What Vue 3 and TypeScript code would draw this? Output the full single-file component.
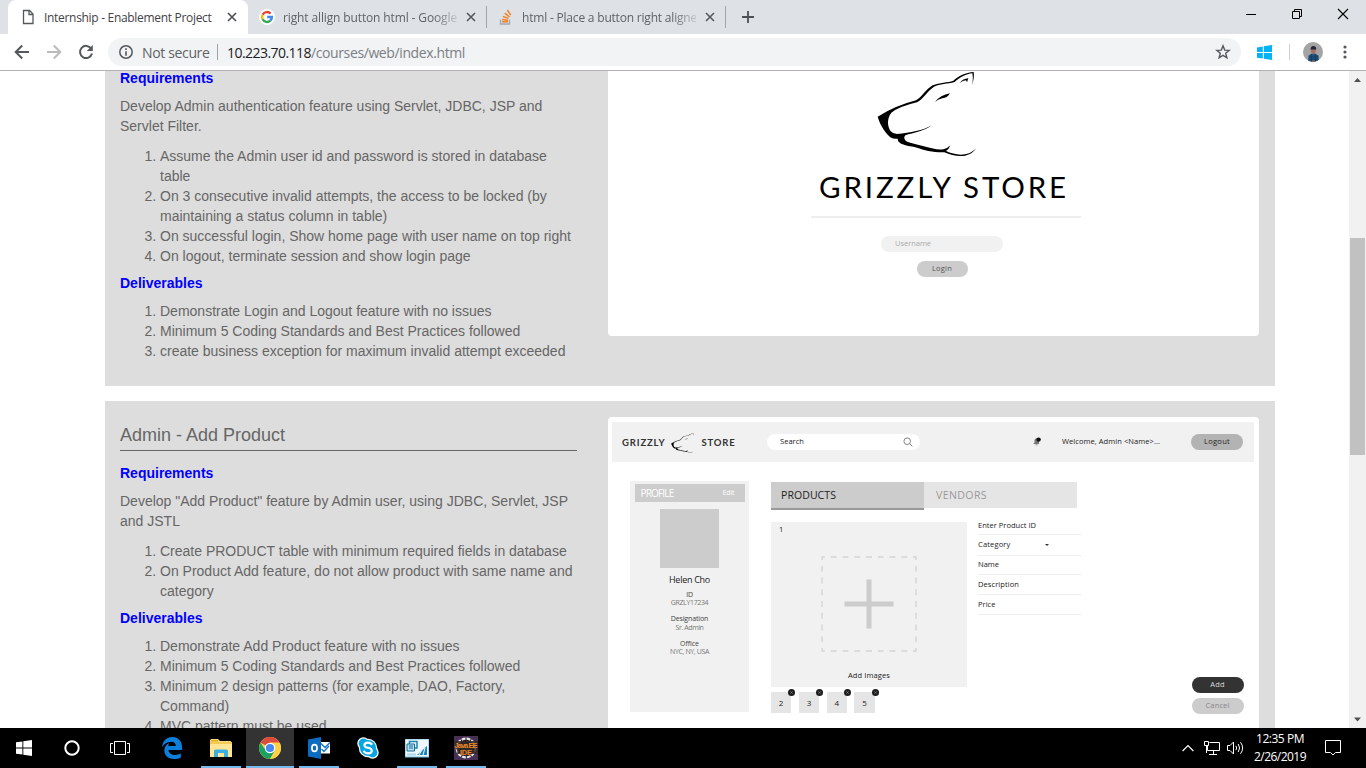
<script setup lang="ts">
import type { Directive } from 'vue'

interface Tab { title: string; kind: 'page' | 'google' | 'stack'; width: number }

const tabs: Tab[] = [
  { title: 'right allign button html - Google', kind: 'google', width: 174 },
  { title: 'html - Place a button right aligne', kind: 'stack', width: 175 },
]

const loginRequirements = [
  'Assume the Admin user id and password is stored in database table',
  'On 3 consecutive invalid attempts, the access to be locked (by maintaining a status column in table)',
  'On successful login, Show home page with user name on top right',
  'On logout, terminate session and show login page',
]
const loginDeliverables = [
  'Demonstrate Login and Logout feature with no issues',
  'Minimum 5 Coding Standards and Best Practices followed',
  'create business exception for maximum invalid attempt exceeded',
]
const productRequirements = [
  'Create PRODUCT table with minimum required fields in database',
  'On Product Add feature, do not allow product with same name and category',
]
const productDeliverables = [
  'Demonstrate Add Product feature with no issues',
  'Minimum 5 Coding Standards and Best Practices followed',
  'Minimum 2 design patterns (for example, DAO, Factory, Command)',
  'MVC pattern must be used',
]
const fields = [
  { label: 'Enter Product ID', width: 58, cls: 'f1' },
  { label: 'Category', width: 32.5, cls: 'f2' },
  { label: 'Name', width: 21, cls: 'f3' },
  { label: 'Description', width: 41, cls: 'f4' },
  { label: 'Price', width: 17.5, cls: 'f5' },
]
const thumbs = [2, 3, 4, 5]

// Tracks a label's letters so that it spans the given width in pixels.
const vFit: Directive<HTMLElement, number> = {
  mounted(el, { value }) {
    const count = (el.textContent ?? '').trim().length
    const natural = el.getBoundingClientRect().width
    el.style.letterSpacing = `${(value - natural) / count}px`
  },
}

const bearPath =
  'M232 140 Q285 107 347 91 C366 80 376 58 397 46 C418 37 442 38 459 32 C474 18 496 8 520 6 C522 20 519 34 515 46 C518 32 518 20 516 10 C498 12 478 22 463 36 C442 42 418 41 401 50 C382 62 372 84 350 97 Q298 109 273 128 C260 145 260 168 271 184 Q278 192 290 192 C330 188 368 182 394 166 C372 184 340 188 315 196 C308 203 313 213 325 217 C350 224 375 230 395 235 Q415 240 429 238 Q441 236 450 226 Q446 238 437 243 C465 256 503 262 528 234 C506 268 464 260 432 247 C400 248 370 240 350 233 C330 229 310 226 300 220 Q290 214 293 206 Q280 208 270 202 C250 184 238 160 232 140Z'
</script>

<template>
  <div class="screen">
    <header class="tabstrip">
      <div class="tab active">
        <svg class="tabicon" width="16" height="16" viewBox="0 0 16 16"><path d="M3.5 1.5H9.5L13 5V14.5H3.5ZM9 1.5V5.5H13" fill="none" stroke="#55585c" stroke-width="1.3" /></svg>
        <span class="tabtitle"><span v-fit="167.5" class="fit">Internship - Enablement Project</span></span>
        <svg class="close" width="10" height="10" viewBox="0 0 10 10"><path d="M1 1L9 9M9 1L1 9" stroke="#4a4d51" stroke-width="1.6" /></svg>
      </div>
      <div v-for="t in tabs" :key="t.kind" class="tab idle">
        <svg v-if="t.kind === 'google'" class="tabicon" width="16" height="16" viewBox="0 0 16 16">
          <circle cx="8" cy="8" r="8" fill="#fff" />
          <g fill="none" stroke-width="2.4">
            <path d="M11.6 4.6A5 5 0 0 0 3.6 5.7" stroke="#ea4335" />
            <path d="M3.6 5.7A5 5 0 0 0 3.6 10.3" stroke="#fbbc05" />
            <path d="M3.6 10.3A5 5 0 0 0 11.3 11.7" stroke="#34a853" />
            <path d="M11.3 11.7A5 5 0 0 0 12.9 8H8.2" stroke="#4285f4" />
          </g>
        </svg>
        <svg v-else class="tabicon" width="16" height="16" viewBox="0 0 16 16">
          <path d="M2.5 10.5V15H11.5V10.5" fill="none" stroke="#a4a8ac" stroke-width="1.3" />
          <path d="M4 12.8H10M4.2 10.4L10.1 11.2M4.9 7.5L10.5 9.4M6.8 4.2L11.5 8M9.3 1L12.8 6.2" fill="none" stroke="#f48024" stroke-width="1.5" />
        </svg>
        <span class="tabtitle faded"><span v-fit="t.width" class="fit">{{ t.title }}</span></span>
        <svg class="close" width="10" height="10" viewBox="0 0 10 10"><path d="M1 1L9 9M9 1L1 9" stroke="#55585c" stroke-width="1.6" /></svg>
      </div>
      <svg class="plus" width="12" height="12" viewBox="0 0 12 12"><path d="M6 0V12M0 6H12" stroke="#4d5054" stroke-width="1.8" /></svg>
      <div class="winbtns">
        <svg width="46" height="28" viewBox="0 0 46 28"><path d="M18 14.5H28" stroke="#000" /></svg>
        <svg width="46" height="28" viewBox="0 0 46 28"><path d="M18.5 11.5H25.5V18.5H18.5ZM20.5 11V9.5H27.5V16.5H26" fill="none" stroke="#000" /></svg>
        <svg width="46" height="28" viewBox="0 0 46 28"><path d="M18 9L28 19M28 9L18 19" stroke="#000" stroke-width="1.1" /></svg>
      </div>
    </header>

    <div class="toolbar">
      <svg class="nav" width="16" height="16" viewBox="0 0 16 16"><path d="M15 8H2M8.2 1.5L1.7 8L8.2 14.5" fill="none" stroke="#55585d" stroke-width="2" /></svg>
      <svg class="nav" width="16" height="16" viewBox="0 0 16 16"><path d="M1 8H14M7.8 1.5L14.3 8L7.8 14.5" fill="none" stroke="#b9bbbe" stroke-width="2" /></svg>
      <svg class="nav" width="16" height="16" viewBox="0 0 16 16"><path d="M13.2 4.6A6.1 6.1 0 1 0 14 9.6" fill="none" stroke="#55585d" stroke-width="2" /><path d="M14.8 1V7H8.8Z" fill="#55585d" /></svg>
      <div class="omnibox">
        <svg class="info" width="14" height="14" viewBox="0 0 14 14"><circle cx="7" cy="7" r="6.2" fill="none" stroke="#55585d" stroke-width="1.5" /><path d="M7 3.2V4.9M7 6.2V10.8" stroke="#55585d" stroke-width="1.6" /></svg>
        <span class="secure"><span v-fit="67.5" class="fit">Not secure</span></span>
        <i class="bar"></i>
        <span class="url"><span v-fit="84" class="fit host">10.223.70.118</span><span v-fit="154" class="fit">/courses/web/index.html</span></span>
        <svg class="star" width="16" height="16" viewBox="0 0 16 16"><path d="M8 1.8L9.7 6.1L14.2 6.4L10.7 9.3L11.9 13.8L8 11.3L4.1 13.8L5.3 9.3L1.8 6.4L6.3 6.1Z" fill="none" stroke="#55585d" stroke-width="1.4" /></svg>
      </div>
      <svg class="winext" width="15" height="15" viewBox="0 0 15 15"><path d="M0 2.4L5.8 1.5V7H0ZM6.8 1.3L15 0V7H6.8ZM0 8H5.8V13.5L0 12.7ZM6.8 8H15V15L6.8 13.8Z" fill="#00b3f4" /></svg>
      <i class="sep"></i>
      <svg class="avatar" width="20" height="20" viewBox="0 0 20 20">
        <defs><clipPath id="face"><circle cx="10" cy="10" r="10" /></clipPath></defs>
        <g clip-path="url(#face)"><rect width="20" height="20" fill="#a5a4a4" /><path d="M5 20L5.5 13.5L9 11.5H12L15.5 13.5L16 20Z" fill="#1d5382" /><path d="M6 15H15M6 17.5H15M8.5 12V20M12.5 12V20" stroke="#153651" stroke-width=".7" /><ellipse cx="10.4" cy="8.5" rx="2.4" ry="3.4" fill="#a56e60" /><path d="M7.6 7.6Q7.4 4 10.4 4T13.2 7.6Z" fill="#252839" /><path d="M9 18.5H12V20H9Z" fill="#9c655c" /></g>
      </svg>
      <svg class="dots" width="4" height="14" viewBox="0 0 4 14"><g fill="#55585d"><circle cx="2" cy="2" r="1.6" /><circle cx="2" cy="7" r="1.6" /><circle cx="2" cy="12" r="1.6" /></g></svg>
    </div>

    <div class="viewport">
      <main class="page">
        <section class="panel first">
          <div class="copy">
            <h4>Requirements</h4>
            <p>Develop Admin authentication feature using Servlet, JDBC, JSP and Servlet Filter.</p>
            <ol><li v-for="r in loginRequirements" :key="r">{{ r }}</li></ol>
            <h4>Deliverables</h4>
            <ol><li v-for="r in loginDeliverables" :key="r">{{ r }}</li></ol>
          </div>
          <div class="shot login">
            <svg class="bear" width="100" height="87" viewBox="230 3 300 261"><path :d="bearPath" /><path d="M404 96Q420 75 449 70Q442 84 426 85Q412 88 404 96ZM478 39Q488 26 504 25L500 37L497 31Q488 32 478 39Z" /></svg>
            <div class="brand"><span v-fit="250" class="fit">GRIZZLY STORE</span></div>
            <div class="rule"></div>
            <div class="user"><span v-fit="36" class="fit">Username</span></div>
            <div class="loginbtn"><span v-fit="20" class="fit">Login</span></div>
          </div>
        </section>

        <section class="panel second">
          <div class="copy">
            <h3>Admin - Add Product</h3>
            <h4>Requirements</h4>
            <p>Develop "Add Product" feature by Admin user, using JDBC, Servlet, JSP and JSTL</p>
            <ol><li v-for="r in productRequirements" :key="r">{{ r }}</li></ol>
            <h4>Deliverables</h4>
            <ol><li v-for="r in productDeliverables" :key="r">{{ r }}</li></ol>
          </div>
          <div class="shot product">
            <div class="mockhead">
              <div class="minibrand">
                <span v-fit="43.5" class="fit">GRIZZLY</span>
                <svg width="23" height="20" viewBox="230 3 300 261"><path :d="bearPath" /><path d="M404 96Q420 75 449 70Q442 84 426 85Q412 88 404 96Z" /></svg>
                <span v-fit="34" class="fit">STORE</span>
              </div>
              <div class="search"><span v-fit="24" class="fit">Search</span>
                <svg width="10" height="10" viewBox="0 0 10 10"><circle cx="4.2" cy="4.2" r="3.3" fill="none" stroke="#666" stroke-width=".8" /><path d="M6.6 6.6L9.3 9.3" stroke="#666" stroke-width=".9" /></svg>
              </div>
              <svg class="bell" width="8" height="9" viewBox="0 0 8 9"><path d="M.5 6.5L1.5 5.5V3Q2 1.2 4 1.2L6 3V6.5L6.5 7H.5Z" fill="#777" /><path d="M2.5 7.8H4.5" stroke="#888" /><circle cx="5.6" cy="2.6" r="2.2" fill="#111" /></svg>
              <div class="welcome"><span v-fit="98" class="fit">Welcome, Admin &lt;Name&gt;...</span></div>
              <div class="pill logout"><span v-fit="26" class="fit">Logout</span></div>
            </div>
            <div class="mockbody">
              <aside class="profile">
                <div class="phead"><span v-fit="33" class="fit big">PROFILE</span><span v-fit="12" class="fit">Edit</span></div>
                <div class="photo"></div>
                <div class="pname"><span v-fit="41" class="fit">Helen Cho</span></div>
                <div class="pl"><span v-fit="6.5" class="fit">ID</span></div>
                <div class="pv"><span v-fit="37.5" class="fit">GRZLY17234</span></div>
                <div class="pl"><span v-fit="37.5" class="fit">Designation</span></div>
                <div class="pv"><span v-fit="28" class="fit">Sr. Admin</span></div>
                <div class="pl"><span v-fit="19" class="fit">Office</span></div>
                <div class="pv"><span v-fit="39" class="fit">NYC, NY, USA</span></div>
              </aside>
              <div class="work">
                <div class="mocktabs">
                  <div class="on"><span v-fit="55" class="fit">PRODUCTS</span></div>
                  <div class="off"><span v-fit="51" class="fit">VENDORS</span></div>
                </div>
                <div class="entry">
                  <div class="images">
                    <div class="drop">
                      <span class="num">1</span>
                      <svg width="96" height="96" viewBox="0 0 96 96"><rect x="1" y="1" width="94" height="94" fill="none" stroke="#d3d3d3" stroke-width="1.3" stroke-dasharray="5.8 5.95" stroke-dashoffset="2.9" /><path d="M48 23.5V72.5M23.5 48H72.5" stroke="#ccc" stroke-width="5" /></svg>
                      <div class="addimg"><span v-fit="42" class="fit">Add Images</span></div>
                    </div>
                    <div class="thumbs">
                      <div v-for="n in thumbs" :key="n" class="thumb">{{ n }}<svg class="x" width="7" height="7" viewBox="0 0 7 7"><circle cx="3.5" cy="3.5" r="3.5" fill="#1d1d1d" /><path d="M2.3 2.3L4.7 4.7M4.7 2.3L2.3 4.7" stroke="#aaa" stroke-width=".5" /></svg></div>
                    </div>
                  </div>
                  <div class="form">
                    <div v-for="f in fields" :key="f.cls" :class="['field', f.cls]">
                      <span v-fit="f.width" class="fit">{{ f.label }}</span>
                      <i v-if="f.cls === 'f2'" class="caret"></i>
                    </div>
                  </div>
                </div>
              </div>
              <div class="actions">
                <div class="pill add"><span v-fit="14.5" class="fit">Add</span></div>
                <div class="pill cancel"><span v-fit="24" class="fit">Cancel</span></div>
              </div>
            </div>
          </div>
        </section>
      </main>
      <div class="scroll">
        <svg width="17" height="17" viewBox="0 0 17 17"><path d="M5 11H12L8.5 7Z" fill="#505050" /></svg>
        <div class="thumbbar"></div>
        <svg width="17" height="17" viewBox="0 0 17 17"><path d="M5 6.5H12L8.5 10.5Z" fill="#505050" /></svg>
      </div>
    </div>

    <footer class="taskbar">
      <div class="sys"><svg width="16" height="16" viewBox="0 0 16 16"><path d="M0 2.3L6.4 1.4V7.5H0ZM7.3 1.2L16 0V7.5H7.3ZM0 8.5H6.4V14.6L0 13.7ZM7.3 8.5H16V16L7.3 14.8Z" fill="#fff" /></svg></div>
      <div class="sys"><svg width="16" height="16" viewBox="0 0 16 16"><circle cx="8" cy="8" r="6.7" fill="none" stroke="#fff" stroke-width="2" /></svg></div>
      <div class="sys"><svg width="20" height="14" viewBox="0 0 20 14"><path d="M4.5 .5H15.5V13.5H4.5ZM3 2.5H.5V11.5H3M17 2.5H19.5V11.5H17" fill="none" stroke="#fff" /></svg></div>
      <div class="app">
        <svg width="20" height="22" viewBox="0 0 20 22"><path d="M0 10C.8 3.5 5 0 10.2 0C16.5 0 20 4.5 20 9.7V13H6.5C6.8 16.5 9.8 18 13 18C15 18 17.3 17.3 18.8 16.3V20.5C16.8 21.6 14.4 22 12 22C6.5 22 2.3 18.7 2.3 13.5C2.3 10.2 4.2 7.5 7.2 6C6.6 7 6.4 8.2 6.4 9H13.8C13.8 6.5 12.4 4.7 9 4.7C5.2 4.7 2 7 0 10Z" fill="#0c7fdc" /></svg>
      </div>
      <div class="app open">
        <svg width="22" height="19" viewBox="0 0 22 19"><path d="M0 1.5Q0 0 1.5 0H8L10 2H20.5L22 4V18H0Z" fill="#fbdc7b" /><path d="M0 3H22V5H0Z" fill="#f3cb53" /><path d="M1 1H8V2.4H1Z" fill="#dfa922" /><path d="M0 5H22V18H0Z" fill="#ffe594" /><path d="M4 18V12Q4 10.5 5.5 10.5H16.5Q18 10.5 18 12V18H14V14H8V18Z" fill="#3aaee2" /></svg>
      </div>
      <div class="app open current">
        <svg width="22" height="22" viewBox="0 0 22 22"><circle cx="11" cy="11" r="11" fill="#fdd046" /><path d="M11 11L1.5 5.5A11 11 0 0 1 20.5 5.5H11Z" fill="#dd4b3e" /><path d="M1.5 5.5A11 11 0 0 0 11 22L15.8 13.8L11 11H5Z" fill="#1ba261" /><path d="M11 6H20.8A11 11 0 0 1 11 22L15.8 13.8Z" fill="#fdd046" /><circle cx="11" cy="11" r="5.3" fill="#fff" /><circle cx="11" cy="11" r="4.1" fill="#4688f1" /></svg>
      </div>
      <div class="app open">
        <svg width="22" height="22" viewBox="0 0 22 22"><path d="M12 5H22V16.5H12Z" fill="#fff" /><path d="M12.5 6L17 10.5L22 5.5M13.5 12L16 14.5L21 9" fill="none" stroke="#1374c6" stroke-width="1.3" /><path d="M0 2.5L13 0V22L0 19.5Z" fill="#0e6cc0" /><ellipse cx="6.5" cy="11" rx="2.6" ry="3.4" fill="none" stroke="#fff" stroke-width="1.7" /></svg>
      </div>
      <div class="app">
        <svg width="22" height="22" viewBox="0 0 22 22"><circle cx="11" cy="11" r="9.2" fill="#fff" /><circle cx="6.4" cy="6.4" r="6.1" fill="#fff" /><circle cx="15.6" cy="15.6" r="6.1" fill="#fff" /><circle cx="11" cy="11" r="8" fill="#08a5e4" /><circle cx="6.5" cy="6.5" r="4.9" fill="#08a5e4" /><circle cx="15.5" cy="15.5" r="4.9" fill="#08a5e4" /><path d="M15 7.8Q14 5.6 11 5.6Q7.4 5.6 7.4 8.2Q7.4 10.2 11 10.8Q14.8 11.5 14.8 13.8Q14.8 16.4 11 16.4Q7.6 16.4 6.8 13.8" fill="none" stroke="#fff" stroke-width="2.1" /></svg>
      </div>
      <div class="app open">
        <svg width="24" height="19" viewBox="0 0 24 19"><path d="M0 0H24V18H0Z" fill="#edf7fc" stroke="#78bede" /><path d="M4.5 2.5H12V9H4.5Z" fill="#edf7fc" stroke="#1d87b7" stroke-width="1.5" /><path d="M2 5H9.5V12H2Z" fill="#b9dfef" stroke="#176c9b" /><path d="M4 7H8M4 9H8" stroke="#176c9b" /><path d="M12 16L22 7V16Z" fill="#1685bd" /><path d="M14 16L17 11M18 16L20 9" stroke="#edf7fc" /><path d="M2 15.5H11" stroke="#acd7e9" stroke-width="2" /></svg>
      </div>
      <div class="app open">
        <svg width="24" height="24" viewBox="0 0 24 24"><path d="M0 0H24V24H0Z" fill="#463054" /><circle cx="12" cy="12" r="9.3" fill="#282224" stroke="#ece6e4" stroke-width="2.2" stroke-dasharray="3.8 1.1" /><path d="M0 5H24V18H4Z" fill="#312725" opacity=".85" /><text x="12" y="11.5" text-anchor="middle" textLength="23">Java EE</text><text x="12" y="18.5" text-anchor="middle" textLength="12">IDE</text></svg>
      </div>
      <div class="tray">
        <svg class="up" width="12" height="8" viewBox="0 0 12 8"><path d="M.6 7L6 1.5L11.4 7" fill="none" stroke="#fff" stroke-width="1.2" /></svg>
        <svg class="net" width="16" height="14" viewBox="0 0 16 14"><path d="M5.5 1.5H15.5V9.5H3.5V5M9.5 10V13M5 13.5H13M.5 .5H4.5V4.5H.5ZM2.5 5V12" fill="none" stroke="#fff" /></svg>
        <svg class="vol" width="17" height="14" viewBox="0 0 17 14"><path d="M.5 4.5H3L6.5 1V13L3 9.5H.5ZM8.8 4.8Q10.6 7 8.8 9.2M11.2 3Q14 7 11.2 11M13.5 1.2Q17.8 7 13.5 12.8" fill="none" stroke="#fff" /></svg>
        <div class="clock"><span v-fit="48" class="fit">12:35 PM</span><span v-fit="52" class="fit">2/26/2019</span></div>
        <svg class="note" width="16" height="16" viewBox="0 0 16 16"><path d="M.5 .5H15.5V12.5H10.5L8 15L5.5 12.5H.5Z" fill="none" stroke="#fff" /></svg>
      </div>
    </footer>
  </div>
</template>

<style>
body { margin: 0; overflow: hidden; }
</style>

<style scoped>
* { box-sizing: border-box; }
svg { display: block; flex: none; }
.screen { width: 1366px; height: 768px; overflow: hidden; background: #fff; font-family: "Open Sans", "Noto Sans", sans-serif; display: flex; flex-direction: column; }
.fit { display: inline-block; white-space: nowrap; }

.tabstrip { height: 34px; flex: none; background: #dee1e6; display: flex; padding-left: 8px; }
.tab { width: 239px; height: 34px; display: flex; align-items: center; padding-left: 12px; flex: none; font-size: 12px; color: #5f6368; }
.tab.active { background: #fff; border-radius: 8px 8px 0 0; color: #3f4246; width: 240px; }
.tab.idle { padding-left: 11px; width: 239px; border-right: 1px solid transparent; border-image: linear-gradient(#0000 7px, #a2a5aa 7px, #a2a5aa 27px, #0000 27px) 1; }
.tab.idle .close { margin-left: 9px; }
.tabtitle { margin-left: 8px; width: 174px; overflow: hidden; white-space: nowrap; }
.active .tabtitle { width: 175px; }
.active .close { margin-left: 8px; }
.faded { mask-image: linear-gradient(90deg, #000 150px, #0003 174px); }
.plus { margin: 11px 0 0 16px; }
.winbtns { display: flex; margin-left: auto; }

.toolbar { height: 37px; flex: none; display: flex; align-items: center; border-bottom: 1px solid #b2b0b2; padding: 0 19px 0 14px; }
.nav { margin-right: 16px; }
.omnibox { height: 28px; width: 1133px; margin-left: -2px; border-radius: 14px; background: #f1f3f4; display: flex; align-items: center; padding: 0 10px 0 11px; font-size: 14px; color: #5f6368; }
.secure { margin-left: 9px; width: 67px; white-space: nowrap; }
.bar { width: 1px; height: 16px; background: #9ea1a5; margin: 0 9px 0 8px; }
.url { color: #7b7f84; white-space: nowrap; }
.host { color: #202124; }
.star { margin-left: auto; }
.winext { margin-left: 16px; }
.sep { width: 1px; height: 16px; background: #cdcfd2; margin: 0 13px 0 17px; }
.dots { margin-left: auto; }

.viewport { height: 657px; flex: none; display: flex; overflow: hidden; }
.page { width: 1349px; height: 657px; overflow: hidden; padding: 0 74px 0 105px; font: 14px/20px "Liberation Sans", Arial, sans-serif; color: #666; }
.panel { width: 1170px; background: #ddd; display: flex; padding: 0 15px; }
.first { height: 315px; margin-bottom: 15px; }
.second { height: 400px; padding-top: 16px; }
.copy { width: 457px; flex: none; margin-right: 31px; }
.first .copy { margin-top: -3px; }
h3 { font-weight: 400; font-size: 18px; line-height: 20px; margin: 8px 0 12px; padding-bottom: 5px; border-bottom: 1px solid #666; }
h4 { margin: 0 0 8px; font-size: 14px; line-height: 20px; color: #00f; }
p { margin: 0 0 10px; }
ol { margin: 0 0 7px; padding-left: 40px; }

.shot { width: 651px; background: #fff; color: #222; font-family: "Open Sans", "Noto Sans", sans-serif; line-height: 1; font-size: 7.5px; flex: none; }
.login { height: 265px; border-radius: 0 0 4px 4px; display: flex; flex-direction: column; align-items: center; padding-right: 0; padding-left: 24px; }
.bear { margin: 0 14px 0 0; flex: none; margin-right: 38px; }
.brand { font: 29.5px/30px Lato, sans-serif; color: #000; margin-top: 14px; height: 30px; margin-right: 3px; }
.rule { width: 270px; height: 2px; background: #eee; margin-top: 14px; }
.user { width: 122px; height: 16px; border-radius: 8px; background: #f1f1f1; color: #aaa; margin: 18px 7px 0 0; padding: 4px 14px; }
.loginbtn { width: 51px; height: 16px; border-radius: 8px; background: #ccc; color: #555; margin: 9px 7px 0 0; text-align: center; padding-top: 4px; }

.product { border-radius: 4px; height: 320px; padding: 5px 5px 0 4px; }
.mockhead { height: 39.5px; background: #f1f1f1; display: flex; align-items: center; }
.minibrand { display: flex; align-items: center; font: 700 9.5px/12px Lato, sans-serif; color: #333; width: 155px; padding: 2px 0 0 10px; }
.minibrand svg { margin: 0 8px 0 5px; }
.search { width: 153px; height: 16.5px; background: #fff; border-radius: 9px; display: flex; align-items: center; justify-content: space-between; padding: 0 7px 0 13px; }
.bell { margin-left: 113px; }
.welcome { margin-left: 21px; width: 98px; }
.pill { width: 52px; height: 16px; border-radius: 8px; display: flex; align-items: center; justify-content: center; }
.logout { background: #b3b3b3; margin-left: 31px; }
.mockbody { display: flex; padding: 19px 0 0 18px; }
.profile { width: 119px; height: 231px; background: #f1f1f1; text-align: center; padding: 3px 4px; font-size: 7px; display: flex; flex-direction: column; align-items: center; }
.phead { width: 110px; height: 18px; background: #ccc; color: #fff; display: flex; align-items: center; justify-content: space-between; padding: 0 10px 0 6px; flex: none; }
.phead .big { font-size: 10px; }
.photo { width: 59px; height: 59px; background: #ccc; flex: none; margin-top: 7px; }
.pname { font-size: 9px; margin: 7px 0 7px; height: 9px; }
.pl { height: 8.5px; color: #444; }
.pv { height: 8px; color: #777; margin-bottom: 8px; }
.work { margin-left: 22px; width: 310px; padding-top: 1px; }
.mocktabs { display: flex; height: 28px; font-size: 10.5px; }
.on { width: 153px; height: 28.5px; background: #ccc; border-bottom: 2.5px solid #999; padding: 8px 10px; color: #222; }
.off { width: 153px; height: 26px; background: #e5e5e5; padding: 8px 12px; color: #999; }
.entry { display: flex; margin-top: 12px; }
.images { width: 196px; }
.drop { height: 165px; background: #f1f1f1; display: flex; flex-direction: column; align-items: center; }
.num { align-self: flex-start; margin: 4px 0 0 8px; height: 8px; }
.drop svg { margin-top: 22px; }
.addimg { margin-top: 20px; }
.thumbs { display: flex; gap: 7.5px; margin-top: 5.5px; }
.thumb { width: 20.3px; height: 20.5px; background: #e5e5e5; text-align: center; line-height: 21px; font-size: 8px; position: relative; }
.x { position: absolute; right: -4px; top: -3.5px; }
.form { margin-left: 11px; width: 103px; padding-top: 0; }
.field { border-bottom: 1px solid #eee; display: flex; align-items: center; }
.f1 { height: 13px; padding-bottom: 4px; }
.f2 { height: 21.5px; }
.f3 { height: 19px; }
.f4 { height: 19.5px; }
.f5 { height: 20.5px; }
.caret { border: 2.5px solid transparent; border-top-color: #333; border-bottom: 0; margin-left: 34px; }
.actions { margin: 196.5px 0 0 110.5px; }
.add { background: #333; color: #ddd; }
.cancel { background: #ccc; color: #888; margin-top: 5px; }

.scroll { width: 17px; background: #f1f1f1; display: flex; flex-direction: column; }
.thumbbar { width: 14px; height: 217px; margin: 150px 0 auto 1px; background: #c1c1c1; width: 15px; }

.taskbar { height: 40px; flex: none; background: #000; display: flex; }
.sys { width: 48px; display: flex; align-items: center; justify-content: center; }
.sys:nth-child(3) { width: 51px; padding-right: 3px; }
.app { width: 49px; display: flex; align-items: center; justify-content: center; border-image: none; }
.open { background: linear-gradient(#76b9ed, #76b9ed) center bottom / 40px 2px no-repeat; }
.current { background: linear-gradient(#76b9ed, #76b9ed) center bottom / 48px 2px no-repeat, linear-gradient(#333, #333) center / 48px 40px no-repeat; }
.app text { font: 700 7.5px "Liberation Sans", sans-serif; fill: #e88728; }
.tray { margin-left: auto; display: flex; align-items: center; padding-right: 25px; color: #fff; }
.net { margin-left: 10px; }
.vol { margin-left: 7px; }
.clock { width: 54px; margin: 0 18px 0 9px; font-size: 12px; line-height: 18px; display: flex; flex-direction: column; align-items: center; }
</style>
